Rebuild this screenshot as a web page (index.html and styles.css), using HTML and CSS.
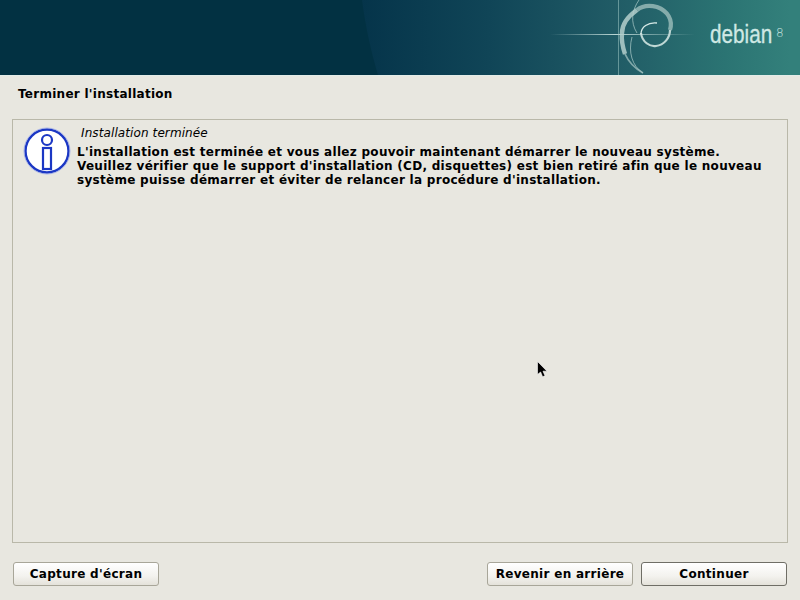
FILE: index.html
```html
<!DOCTYPE html>
<html lang="fr">
<head>
<meta charset="utf-8">
<title>Terminer l'installation</title>
<link rel="stylesheet" href="styles.css">
</head>
<body>
<div class="screen">
  <header class="banner">
    <svg class="swirl" width="800" height="75" viewBox="0 0 800 75" aria-hidden="true">
      <defs>
        <linearGradient id="glow" gradientUnits="userSpaceOnUse" x1="360" y1="0" x2="790" y2="0">
          <stop offset="0" stop-color="#05344a"/>
          <stop offset="0.3" stop-color="#104557"/>
          <stop offset="0.6" stop-color="#215c66"/>
          <stop offset="0.85" stop-color="#2b7473"/>
          <stop offset="1" stop-color="#33807b"/>
        </linearGradient>
        <linearGradient id="hline" x1="0" x2="1" y1="0" y2="0">
          <stop offset="0" stop-color="#cfe6e2" stop-opacity="0"/>
          <stop offset="0.45" stop-color="#d5ebe7" stop-opacity=".85"/>
          <stop offset="1" stop-color="#cfe6e2" stop-opacity="0"/>
        </linearGradient>
      </defs>
      <rect width="800" height="75" fill="#023142"/>
      <path d="M362 0 C366 30 372 55 378 75 H800 V0 Z" fill="url(#glow)"/>
      <rect x="550" y="34" width="145" height="1" fill="url(#hline)"/>
      <rect x="618" y="0" width="1" height="75" fill="#a9cfcb" opacity=".5"/>
      <path d="M639 0 C632 10 630 22 637 33 M632 37 C628 52 632 66 643 73" fill="none" stroke="#b9d5d2" stroke-width="1" opacity=".65"/>
      <path d="M657 23 C648 22 641 27 641 34" fill="none" stroke="#d6e9e6" stroke-width="1.4"/>
      <path d="M641 33 C642 42 650 47 656 46 C664 45 670 38 670 30" fill="none" stroke="#cfe3e0" stroke-width="2.2" opacity=".9"/>
      <path d="M670 30 C673 20 668 11 657 7 C649 5 642 6 637 10" fill="none" stroke="#9dbebb" stroke-width="4.2" opacity=".8"/>
      <path d="M637 10 C627 17 622 25 622 33 C621 42 623 48 625 54" fill="none" stroke="#b4cfcc" stroke-width="4.4" opacity=".85"/>
      <path d="M625 54 C629 63 636 69 643 73" fill="none" stroke="#a8c6c4" stroke-width="1.8" opacity=".7"/>
    </svg>
    <div class="brand"><span class="brand-name">debian</span><span class="brand-num">8</span></div>
  </header>
  <h1 class="title">Terminer l'installation</h1>
  <main class="frame">
    <svg class="info" width="48" height="48" viewBox="0 0 48 48" aria-hidden="true">
      <circle cx="24" cy="24" r="21.5" fill="#fff" stroke="#1b37c4" stroke-width="2.4"/>
      <circle cx="24" cy="24" r="23" fill="none" stroke="#9aa8e8" stroke-width=".8"/>
      <circle cx="24" cy="13" r="5" fill="#fff" stroke="#1b37c4" stroke-width="2.2"/>
      <rect x="20" y="21" width="8" height="21" fill="#fff" stroke="#1b37c4" stroke-width="2.2"/>
    </svg>
    <div class="message">
      <div class="msg-head">Installation terminée</div>
      <p class="msg-body">L'installation est terminée et vous allez pouvoir maintenant démarrer le nouveau système.<br>Veuillez vérifier que le support d'installation (CD, disquettes) est bien retiré afin que le nouveau<br>système puisse démarrer et éviter de relancer la procédure d'installation.</p>
    </div>
  </main>
  <footer class="actions">
    <button class="btn">Capture d'écran</button>
    <div class="right">
      <button class="btn">Revenir en arrière</button>
      <button class="btn btn-default">Continuer</button>
    </div>
  </footer>
  <svg class="cursor" width="11" height="17" viewBox="0 0 11 17" aria-hidden="true">
    <path d="M0.5 0.5 V13.5 L3.6 11 L5.6 15.8 L8 14.8 L6 10.2 H10 Z" fill="#000" stroke="#fff" stroke-width=".6"/>
  </svg>
</div>
</body>
</html>
```
FILE: styles.css
```css
* { box-sizing: border-box; }
html, body { margin: 0; padding: 0; }
body { background: #e8e7e0; font-family: "DejaVu Sans", sans-serif; color: #000; }
.screen { position: relative; width: 800px; height: 600px; overflow: hidden; display: flex; flex-direction: column; background: #e8e7e0; }
.banner { position: relative; height: 76px; flex: none; background: #023142; border-bottom: 1px solid #e3ece8; }
.swirl { display: block; }
.brand { position: absolute; left: 710px; top: 19px; display: flex; align-items: flex-start; color: #cfe8e4; }
.brand-name { font-family: "Liberation Sans", sans-serif; font-size: 25px; line-height: 30px; display: inline-block; width: 62px; transform: scaleX(.83); transform-origin: left; -webkit-text-stroke: .3px #cfe8e4; }
.brand-num { font-family: "DejaVu Sans", sans-serif; font-size: 12px; line-height: 14px; margin: 7px 0 0 4px; font-weight: 200; }
.title { margin: 0; padding: 10px 0 0 18px; height: 43px; font-size: 12px; letter-spacing: .27px; line-height: 16px; font-weight: 700; }
.frame { margin: 0 12px; height: 424px; flex: none; border: 1px solid #b9b8a9; display: flex; align-items: flex-start; padding: 7px 0 0 10px; }
.info { flex: none; margin-right: 6px; }
.msg-head { font-size: 12px; letter-spacing: .1px; line-height: 14px; font-style: italic; padding-left: 4px; margin-top: -1px; }
.msg-body { margin: 5px 0 0; font-size: 12px; letter-spacing: .29px; line-height: 14px; font-weight: 700; white-space: nowrap; }
.actions { display: flex; justify-content: space-between; padding: 19px 13px 0; }
.right { display: flex; gap: 8px; }
.btn { width: 146px; height: 24px; padding: 0; font: 700 12px/16px "DejaVu Sans", sans-serif; letter-spacing: .3px; color: #000; border: 1px solid #a8a699; border-radius: 3px; background: linear-gradient(#ffffff, #f3f2ee 60%, #e4e2da); }
.btn-default { border-color: #6f6e66; }
.cursor { position: absolute; left: 537px; top: 361px; }
```
